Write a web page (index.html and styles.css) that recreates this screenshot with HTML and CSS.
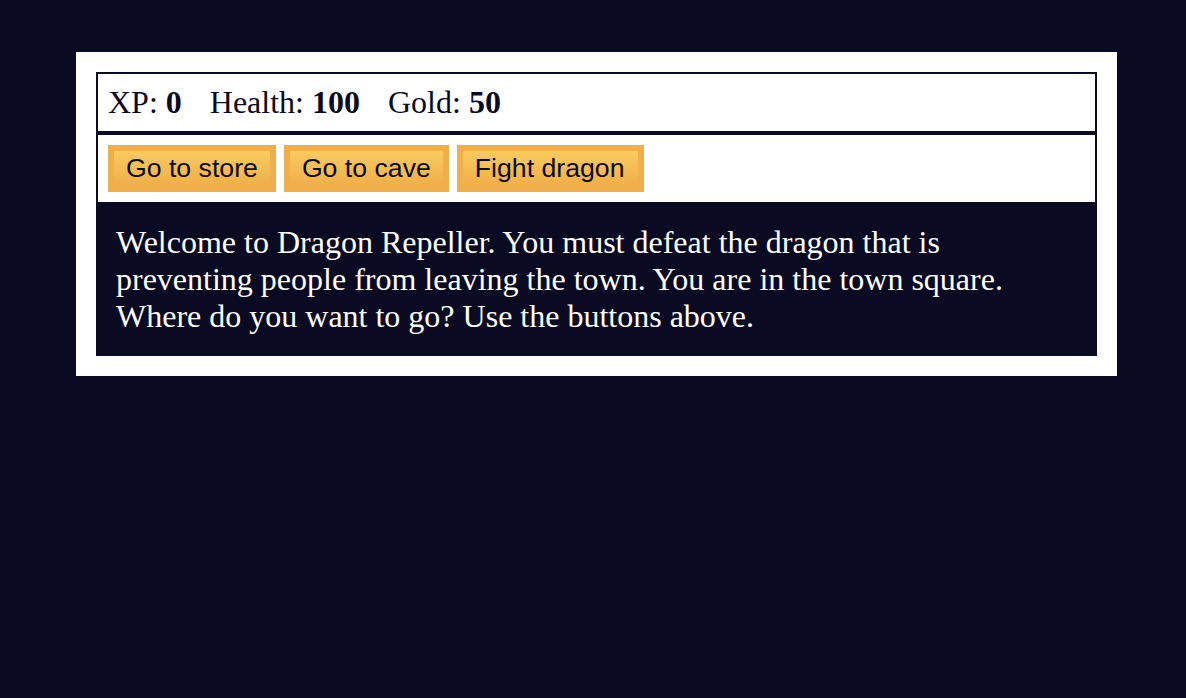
FILE: index.html
```html
<!DOCTYPE html>
<html lang="en">
<head>
<meta charset="UTF-8">
<title>RPG - Dragon Repeller</title>
<link rel="stylesheet" href="styles.css">
</head>
<body>
<div class="game">
  <div class="stats">
    <span class="stat">XP: <strong>0</strong></span>
    <span class="stat">Health: <strong>100</strong></span>
    <span class="stat">Gold: <strong>50</strong></span>
  </div>
  <div class="controls">
    <button class="btn">Go to store</button>
    <button class="btn">Go to cave</button>
    <button class="btn btn-wide">Fight dragon</button>
  </div>
  <div class="text">
    Welcome to Dragon Repeller. You must defeat the dragon that is preventing people from leaving the town. You are in the town square. Where do you want to go? Use the buttons above.
  </div>
</div>
</body>
</html>
```

FILE: styles.css
```css
html, body {
  margin: 0;
  padding: 0;
}

body {
  background-color: #0a0a23;
  font-family: "Liberation Serif", "Times New Roman", serif;
  font-size: 32px;
  min-height: 698px;
}

.game {
  width: 1001px;
  background-color: #ffffff;
  color: #ffffff;
  margin: 52px 0 0 76px;
  padding: 20px;
}

.stats,
.controls {
  border: 2px solid #0a0a23;
  padding: 10px;
  color: #0a0a23;
}

.stat {
  padding-right: 20px;
}

.btn {
  cursor: pointer;
  font-family: "Liberation Sans", Arial, sans-serif;
  font-size: 26.667px;
  color: #0a0a23;
  background-color: #f1b04b;
  background-image: linear-gradient(#f7cb60, #f1ae48);
  border: 6px solid #f0af4b;
  padding: 2px 12px;
  margin: 0;
}

.btn-wide {
  padding-right: 14px;
}

.text {
  background-color: #0a0a23;
  color: #ffffff;
  padding: 20px;
  line-height: 37.2px;
}
```
